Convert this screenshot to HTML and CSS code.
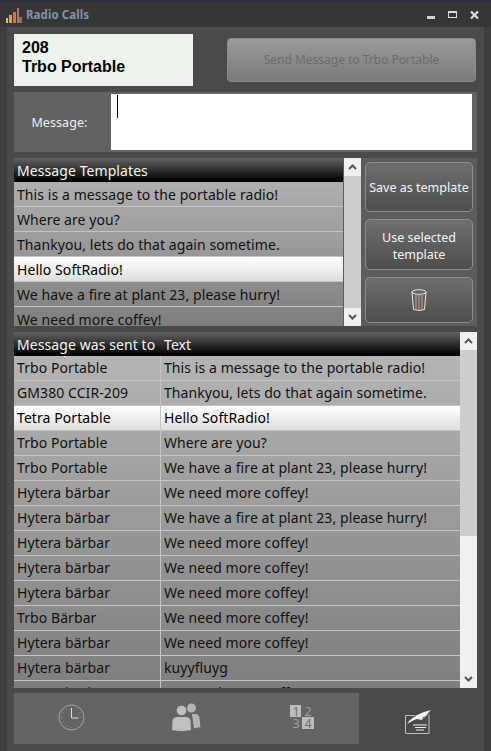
FILE: index.html
```html
<!DOCTYPE html>
<html lang="en">
<head>
    <meta charset="UTF-8">
    <meta name="viewport" content="width=device-width, initial-scale=1.0">
    <title>Radio Calls</title>
    <link rel="stylesheet" href="styles.css">
</head>
<body>

<div class="window">
    <div class="titlebar">
        <svg class="app-icon" width="16" height="15" viewBox="0 0 16 15">
            <rect x="0" y="10" width="2" height="5" fill="#e8c53a"/>
            <rect x="3" y="7" width="3" height="8" fill="#e9a23a"/>
            <rect x="7" y="4" width="3" height="11" fill="#e2702e"/>
            <rect x="11" y="0" width="2" height="15" fill="#b0785a"/>
            <rect x="13" y="9" width="3" height="6" fill="#777"/>
        </svg>
        <span class="title">Radio Calls</span>
        <div class="win-btns">
            <svg class="win-min" width="8" height="3" viewBox="0 0 8 3"><rect width="8" height="3" fill="#d0d0d0"/></svg>
            <svg width="9" height="7" viewBox="0 0 9 7"><rect x=".5" y=".5" width="8" height="6" fill="none" stroke="#dcdcdc"/><rect width="9" height="2" fill="#dcdcdc"/></svg>
            <svg width="9" height="8" viewBox="0 0 9 8"><path d="M1 .5l7 7M8 .5l-7 7" stroke="#dcdcdc" stroke-width="2.200" fill="none"/></svg>
        </div>
    </div>

    <div class="content">
        <div class="top-row">
            <div class="name-box">208<br>Trbo Portable</div>
            <button class="send-btn">Send Message to Trbo Portable</button>
        </div>

        <div class="message-row">
            <div class="message-label">Message:</div>
            <div class="message-input"><span class="caret"></span></div>
        </div>

        <div class="templates">
            <div class="list template-list">
                <div class="list-head">Message Templates</div>
                <div class="row">This is a message to the portable radio!</div>
                <div class="row">Where are you?</div>
                <div class="row">Thankyou, lets do that again sometime.</div>
                <div class="row selected">Hello SoftRadio!</div>
                <div class="row">We have a fire at plant 23, please hurry!</div>
                <div class="row">We need more coffey!</div>
            </div>
            <div class="scrollbar">
                <svg class="arrow" width="9" height="6" viewBox="0 0 9 6"><path d="M1 5l3.500-3.500L8 5" fill="none" stroke="#555" stroke-width="2"/></svg>
                <div class="track"></div>
                <svg class="arrow" width="9" height="6" viewBox="0 0 9 6"><path d="M1 1l3.500 3.500L8 1" fill="none" stroke="#555" stroke-width="2"/></svg>
            </div>
            <div class="side-btns">
                <button class="side-btn save-btn">Save as template</button>
                <button class="side-btn use-btn">Use selected<br>template</button>
                <button class="side-btn trash-btn">
                    <svg width="16" height="23" viewBox="0 0 16 23">
                        <ellipse cx="8" cy="3" rx="7" ry="2.300" fill="none" stroke="#e8e8e8"/>
                        <path d="M1 3l1.500 17.500q5.500 2 11 0L15 3" fill="none" stroke="#e8e8e8"/>
                        <path d="M5 6v14" stroke="#b98f6d" stroke-width="1.500"/>
                        <path d="M8 6v15" stroke="#8f8fb5" stroke-width="1.500"/>
                        <path d="M11 6v14" stroke="#b98f6d" stroke-width="1.500"/>
                    </svg>
                </button>
            </div>
        </div>

        <div class="history">
            <div class="list history-list">
                <div class="list-head cols"><span class="col-to">Message was sent to</span><span class="col-text">Text</span></div>
                <div class="row cols"><span class="col-to">Trbo Portable</span><span class="col-text">This is a message to the portable radio!</span></div>
                <div class="row cols"><span class="col-to">GM380 CCIR-209</span><span class="col-text">Thankyou, lets do that again sometime.</span></div>
                <div class="row cols selected"><span class="col-to">Tetra Portable</span><span class="col-text">Hello SoftRadio!</span></div>
                <div class="row cols"><span class="col-to">Trbo Portable</span><span class="col-text">Where are you?</span></div>
                <div class="row cols"><span class="col-to">Trbo Portable</span><span class="col-text">We have a fire at plant 23, please hurry!</span></div>
                <div class="row cols"><span class="col-to">Hytera bärbar</span><span class="col-text">We need more coffey!</span></div>
                <div class="row cols"><span class="col-to">Hytera bärbar</span><span class="col-text">We have a fire at plant 23, please hurry!</span></div>
                <div class="row cols"><span class="col-to">Hytera bärbar</span><span class="col-text">We need more coffey!</span></div>
                <div class="row cols"><span class="col-to">Hytera bärbar</span><span class="col-text">We need more coffey!</span></div>
                <div class="row cols"><span class="col-to">Hytera bärbar</span><span class="col-text">We need more coffey!</span></div>
                <div class="row cols"><span class="col-to">Trbo Bärbar</span><span class="col-text">We need more coffey!</span></div>
                <div class="row cols"><span class="col-to">Hytera bärbar</span><span class="col-text">We need more coffey!</span></div>
                <div class="row cols"><span class="col-to">Hytera bärbar</span><span class="col-text">kuyyfluyg</span></div>
                <div class="row cols"><span class="col-to">Hytera bärbar</span><span class="col-text">We need more coffey!</span></div>
            </div>
            <div class="scrollbar">
                <svg class="arrow" width="9" height="6" viewBox="0 0 9 6"><path d="M1 5l3.500-3.500L8 5" fill="none" stroke="#555" stroke-width="2"/></svg>
                <div class="track history-track"></div>
                <svg class="arrow" width="9" height="6" viewBox="0 0 9 6"><path d="M1 1l3.500 3.500L8 1" fill="none" stroke="#555" stroke-width="2"/></svg>
            </div>
        </div>

        <div class="tabs">
            <div class="tab">
                <svg width="27" height="27" viewBox="0 0 27 27">
                    <circle cx="13.500" cy="13.500" r="12.500" fill="none" stroke="#b4b4b4" stroke-width=".8"/>
                    <path d="M13.500 4v10h7" fill="none" stroke="#dcdcdc"/>
                    <path d="M13.500 24v-1M3 13.500h1M24 13.500h-1M8.500 4.500l.5 1M18.500 4.500l-.5 1M4.500 8.500l1 .5M4.500 18.500l1-.5M22.500 8.500l-1 .5M22.500 18.500l-1-.5M8.500 22.500l.5-1M18.500 22.500l-.5-1" stroke="#999" stroke-width=".8"/>
                </svg>
            </div>
            <div class="tab">
                <svg width="29" height="28" viewBox="0 0 29 28">
                    <circle cx="19.500" cy="5" r="4.500" fill="#b4b4b4"/>
                    <path d="M18 11h5q4 0 4.500 4l1 9-6.500 1.500-2-14.500z" fill="#b4b4b4"/>
                    <circle cx="9.500" cy="7.500" r="4.800" fill="#c0c0c0"/>
                    <path d="M5 14h9q4 0 4.500 4l.5 9q-9.500 2-19 0l.5-9q.5-4 4.500-4z" fill="#c0c0c0"/>
                </svg>
            </div>
            <div class="tab">
                <svg width="24" height="24" viewBox="0 0 24 24">
                    <rect x="0" y="0" width="11" height="12" fill="#bcbcbc"/>
                    <rect x="12" y="12" width="12" height="12" fill="#bcbcbc"/>
                    <text x="6" y="10.500" class="num dark">1</text>
                    <text x="18" y="10.500" class="num">2</text>
                    <text x="6" y="22.500" class="num">3</text>
                    <text x="18" y="22.500" class="num dark">4</text>
                </svg>
            </div>
            <div class="tab active">
                <svg width="27" height="25" viewBox="0 0 27 25">
                    <path d="M.5 24V6.500H10M24 5.500V24.500H.5" fill="none" stroke="#c0c0c0"/>
                    <path d="M2 15l3-4 7-5 7-3 7-2-5 6-3 1-1 3-5-1-3 1z" fill="#f6f6f6"/>
                    <path d="M17 10l3-2 5-6" fill="none" stroke="#c9917a"/>
                    <path d="M8 16h14M10 18.500h11M11 21h8" stroke="#eee" stroke-width="1.200"/>
                </svg>
            </div>
        </div>
    </div>
</div>

</body>
</html>
```

FILE: styles.css
```css
html, body {
    margin: 0;
    padding: 0;
    background: #3a3a3a;
}

.window {
    width: 491px;
    height: 751px;
    box-sizing: border-box;
    display: flex;
    flex-direction: column;
    overflow: hidden;
    font-family: "Noto Sans", sans-serif;
    font-size: 14px;
    letter-spacing: 0.08px;
    background: #3e3e3e;
    border-top: 2px solid #2b3040;
}

.titlebar {
    height: 25px;
    flex: none;
    display: flex;
    align-items: center;
    padding: 0 12px 0 6px;
    background: #363636;
}

.app-icon {
    margin-right: 4px;
    margin-top: 2px;
}

.title {
    color: #7f93ae;
    font-size: 11.500px;
    font-weight: bold;
}

.win-btns {
    margin-left: auto;
    display: flex;
    align-items: center;
    gap: 13px;
}

.win-min {
    margin-top: 5px;
}

.content {
    flex: 1;
    margin: 0 7px 7px;
    padding: 7px;
    background: #4a4a4a;
    display: flex;
    flex-direction: column;
}

.top-row {
    display: flex;
    height: 52px;
    flex: none;
}

.name-box {
    width: 179px;
    box-sizing: border-box;
    padding: 4px 8px;
    background: #ecf3eb;
    color: #000;
    font-family: "Liberation Sans", sans-serif;
    font-weight: bold;
    font-size: 16px;
    line-height: 19px;
    letter-spacing: 0;
}

.send-btn {
    width: 249px;
    height: 44px;
    margin: 4px 0 0 34px;
    padding-bottom: 2px;
    border: 1px solid #8a8a8a;
    border-radius: 4px;
    background: linear-gradient(#9a9a9a, #7a7a7a);
    color: #6c6c6c;
    font-family: inherit;
    font-size: 12px;
}

.message-row {
    height: 60px;
    flex: none;
    margin-top: 6px;
    display: flex;
    background: #626262;
    padding: 2px 5px 2px 0;
    box-sizing: border-box;
}

.message-label {
    width: 91px;
    padding-right: 6px;
    display: flex;
    align-items: center;
    justify-content: center;
    color: #f0f0f0;
    font-size: 12.500px;
}

.message-input {
    flex: 1;
    background: #fff;
    padding: 1px 6px;
}

.caret {
    display: block;
    width: 1px;
    height: 23px;
    background: #000;
}

.templates {
    height: 168px;
    flex: none;
    margin-top: 6px;
    display: flex;
    background: #5c5c5c;
}

.list {
    overflow: hidden;
    background: linear-gradient(#b8b8b8, #7e7e7e);
}

.template-list {
    width: 329px;
    margin-right: 1px;
}

.list-head {
    height: 24px;
    box-sizing: border-box;
    border-bottom: 1px solid #000;
    padding-left: 3px;
    line-height: 25px;
    color: #f4f4f4;
    background: linear-gradient(#636363, #000);
}

.row {
    height: 25px;
    box-sizing: border-box;
    border-bottom: 1px solid #c4c4c4;
    padding-left: 3px;
    line-height: 25px;
    color: #111;
    white-space: nowrap;
}

.row.selected {
    background: linear-gradient(#fff, #dedede);
    color: #000;
}

.scrollbar {
    width: 17px;
    flex: none;
    display: flex;
    flex-direction: column;
    align-items: center;
    background: #f0f0f0;
}

.arrow {
    flex: none;
    margin: 6px 0;
}

.track {
    flex: 1;
    align-self: stretch;
    background: #cdcdcd;
}

.history-track {
    background: linear-gradient(#cdcdcd 0, #cdcdcd 58%, #f0f0f0 58%);
}

.side-btns {
    flex: 1;
    padding: 4px 4px 3px;
    display: flex;
    flex-direction: column;
    gap: 7px;
}

.side-btn {
    display: flex;
    align-items: center;
    justify-content: center;
    padding: 2px 0 0;
    border: 1px solid #8c8c8c;
    border-radius: 5px;
    background: linear-gradient(#6e6e6e, #4e4e4e);
    color: #f4f4f4;
    font-family: inherit;
    font-size: 12.500px;
    line-height: 17px;
}

.save-btn {
    height: 50px;
}

.use-btn {
    height: 52px;
    padding-top: 3px;
}

.trash-btn {
    height: 46px;
    padding: 0;
}

.history {
    height: 356px;
    flex: none;
    margin-top: 6px;
    display: flex;
}

.history-list {
    flex: 1;
    background: linear-gradient(#b8b8b8, #7e7e7e);
}

.history-list .row {
    line-height: 24px;
}

.cols {
    display: flex;
    padding-left: 0;
}

.col-to {
    width: 147px;
    flex: none;
    box-sizing: border-box;
    padding-left: 3px;
    white-space: nowrap;
}

.col-text {
    padding-left: 3px;
    white-space: nowrap;
}

.row .col-to {
    border-right: 1px solid #c4c4c4;
}

.tabs {
    height: 51px;
    flex: none;
    margin-top: 5px;
    display: flex;
}

.tab {
    width: 115px;
    display: flex;
    align-items: center;
    justify-content: center;
    background: #646464;
    padding-bottom: 3px;
    box-sizing: border-box;
}

.tab.active {
    flex: 1;
    background: #4a4a4a;
    padding: 6px 0 0;
}

.num {
    font-family: "Noto Sans", sans-serif;
    font-size: 12.500px;
    text-anchor: middle;
    fill: #a0a0a0;
}

.num.dark {
    fill: #707070;
}
```
